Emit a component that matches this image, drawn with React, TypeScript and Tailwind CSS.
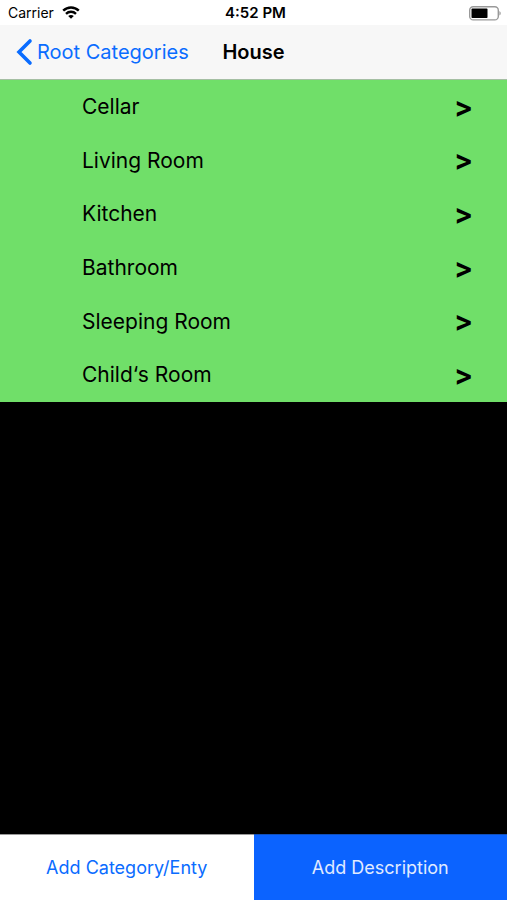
import React from 'react';

interface Category {
  id: string;
  name: string;
}

const categories: Category[] = [
  { id: 'cellar', name: 'Cellar' },
  { id: 'living-room', name: 'Living Room' },
  { id: 'kitchen', name: 'Kitchen' },
  { id: 'bathroom', name: 'Bathroom' },
  { id: 'sleeping-room', name: 'Sleeping Room' },
  { id: 'childs-room', name: 'Child‘s Room' },
];

const WifiIcon: React.FC = () => (
  <svg width="18" height="14" viewBox="0 0 18 14" fill="none" stroke="black" strokeWidth="2.4" aria-hidden="true">
    <path d="M1.2 4.7C5.6 .4 12.4 .4 16.8 4.7" />
    <path d="M4 7.8C6.8 5.1 11.2 5.1 14 7.8" />
    <path d="M9 12.8L6.2 10C7.8 8.5 10.2 8.5 11.8 10Z" fill="black" stroke="none" />
  </svg>
);

const BatteryIcon: React.FC = () => (
  <svg width="33" height="15" viewBox="0 0 33 15" aria-hidden="true">
    <rect x="0.7" y="0.7" width="28.6" height="13.2" rx="3.5" fill="none" stroke="#999" strokeWidth="1.4" />
    <rect x="2.5" y="2.6" width="16" height="9.4" rx="0.8" fill="black" />
    <path d="M30.4 5C32.2 5.8 32.2 8.8 30.4 9.6Z" fill="#999" />
  </svg>
);

const StatusBar: React.FC = () => (
  <div className="grid h-[25px] grid-cols-3 items-center bg-white pt-px pr-1 pl-2 text-sm">
    <div className="flex items-center gap-2">
      <span>Carrier</span>
      <WifiIcon />
    </div>
    <span className="text-center text-[15px] font-semibold">4:52 PM</span>
    <div className="flex justify-end pr-px">
      <BatteryIcon />
    </div>
  </div>
);

const NavigationBar: React.FC = () => (
  <nav className="grid h-[55px] grid-cols-[1fr_auto_1fr] items-center border-b border-[#a5bfa3] bg-[#f7f7f7] px-4 text-xl">
    <a href="#root" className="flex items-center gap-1 whitespace-nowrap text-[#0a6cff]">
      <svg width="17" height="28" viewBox="0 0 17 28" fill="none" stroke="currentColor" strokeWidth="3.6" strokeLinecap="round" aria-hidden="true">
        <path d="M14 3L3 14L14 25" />
      </svg>
      Root Categories
    </a>
    <h1 className="font-semibold">House</h1>
  </nav>
);

const App: React.FC = () => {
  return (
    <div className="flex min-h-screen flex-col bg-black font-['Inter','Liberation_Sans',sans-serif] text-black">
      <header>
        <StatusBar />
        <NavigationBar />
      </header>

      <main className="flex-1">
        <ul className="grid min-h-[322px] auto-rows-fr bg-[#70df69]">
          {categories.map(category => (
            <li key={category.id} className="flex">
              <button className="flex w-full items-center justify-between pr-[34px] pl-[82px] text-left text-[21px]">
                <span>{category.name}</span>
                <span className="text-[28px] leading-8 font-bold">&gt;</span>
              </button>
            </li>
          ))}
        </ul>
      </main>

      <footer className="grid h-[66px] grid-cols-2 text-lg">
        <button className="border-t border-[#999] bg-white text-[#0a6cff]">Add Category/Enty</button>
        <button className="border-t border-[#124fb8] bg-[#0b63ff] text-[#e0ebff]">Add Description</button>
      </footer>
    </div>
  );
};

export default App;
